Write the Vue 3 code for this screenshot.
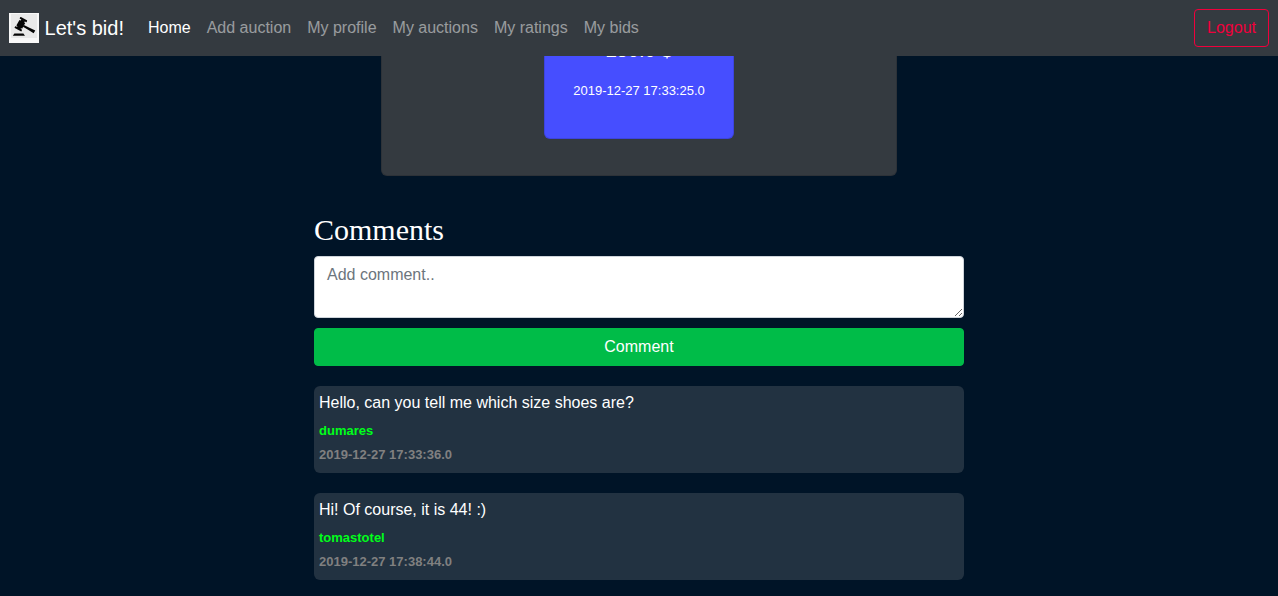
<script setup>
const links = ['Home', 'Add auction', 'My profile', 'My auctions', 'My ratings', 'My bids']
const comments = [
  { text: 'Hello, can you tell me which size shoes are?', author: 'dumares', date: '2019-12-27 17:33:36.0' },
  { text: 'Hi! Of course, it is 44! :)', author: 'tomastotel', date: '2019-12-27 17:38:44.0' },
]
</script>

<template>
  <div class="page">
    <header class="navbar">
      <a class="brand" href="#">
        <svg class="logo" viewBox="0 0 30 30" aria-hidden="true">
          <rect width="30" height="30" fill="#f8f8f8" />
          <rect x="2" y="1" width="26" height="24" fill="#e9e9e9" />
          <g transform="translate(11.8 11.3) rotate(29)" fill="#050505">
            <rect x="-3.3" y="-3.2" width="6.6" height="6.4" />
            <rect x="-3.9" y="-6.4" width="7.8" height="2" rx="0.5" />
            <rect x="-2" y="-5" width="4" height="10" />
            <rect x="-3.9" y="4.2" width="7.8" height="2" rx="0.5" />
            <path d="M3 -1 L8 -1.2 L15.6 -1.7 V1.7 L8 1.2 L3 1Z" />
          </g>
          <path d="M3.8 22.8 L5.4 20.4 H14.4 L16 22.8Z" fill="#050505" />
        </svg>
        Let's bid!
      </a>
      <nav class="links" aria-label="Main">
        <a v-for="(link, i) in links" :key="link" href="#" :class="{ active: i === 0 }">{{ link }}</a>
      </nav>
      <button class="logout" type="button">Logout</button>
    </header>

    <main>
      <section class="auction">
        <div class="bid">
          <p class="price">250.0 $</p>
          <p class="bid-date">2019-12-27 17:33:25.0</p>
        </div>
      </section>

      <section class="comments">
        <h2>Comments</h2>
        <form @submit.prevent>
          <textarea aria-label="Add comment" placeholder="Add comment.." rows="2"></textarea>
          <button class="submit" type="submit">Comment</button>
        </form>
        <article v-for="comment in comments" :key="comment.date" class="comment">
          <p>{{ comment.text }}</p>
          <p class="author">{{ comment.author }}</p>
          <p class="date">{{ comment.date }}</p>
        </article>
      </section>
    </main>
  </div>
</template>

<style>
body {
  background: #001427;
}
</style>

<style scoped>
.page,
.page * {
  box-sizing: border-box;
}

.page {
  color: #fff;
  font: 16px/24px "Liberation Sans", Arial, sans-serif;
}

p,
h2 {
  margin: 0;
}

.navbar {
  position: sticky;
  top: 0;
  z-index: 1;
  display: flex;
  align-items: center;
  height: 56px;
  padding: 0 9px;
  background: #343a40;
}

.brand {
  margin-right: 16px;
  color: #fff;
  font-size: 20px;
  line-height: 30px;
  text-decoration: none;
  white-space: nowrap;
}

.logo {
  width: 30px;
  height: 30px;
  vertical-align: top;
}

.links {
  display: flex;
  flex: 1;
}

.links a {
  padding: 8px;
  color: rgba(255, 255, 255, 0.5);
  text-decoration: none;
}

.links .active {
  color: #fff;
}

.logout {
  padding: 6px 12px;
  border: 1px solid #f0003c;
  border-radius: 4px;
  background: transparent;
  color: #f0003c;
  font: inherit;
}

.auction {
  width: 516px;
  max-width: 100%;
  margin: -20px auto 0;
  padding: 0 20px 36px;
  border: 1px solid rgba(0, 0, 0, 0.125);
  border-radius: 6px;
  background: #343a40;
}

.bid {
  width: 190px;
  margin: 0 auto;
  padding-bottom: 35px;
  border: 1px solid rgba(0, 0, 0, 0.125);
  border-radius: 6px;
  background: #464eff;
  text-align: center;
}

.price {
  margin-bottom: 17px;
  font-size: 20px;
}

.bid-date {
  font-size: 13px;
}

.comments {
  width: 650px;
  max-width: 100%;
  margin: 36px auto 0;
}

h2 {
  margin-bottom: 8px;
  font: 30px/36px "Liberation Serif", "Times New Roman", serif;
}

form {
  display: flex;
  flex-direction: column;
  gap: 10px;
}

textarea {
  height: 62px;
  padding: 6px 12px;
  border: 1px solid #ced4da;
  border-radius: 4px;
  background: #fff;
  color: #495057;
  font: inherit;
  resize: vertical;
}

textarea::placeholder {
  color: #6c757d;
}

.submit {
  padding: 6px 12px;
  border: 1px solid #00bc48;
  border-radius: 4px;
  background: #00bc48;
  color: #fff;
  font: inherit;
}

.comment {
  margin-top: 20px;
  padding: 5px 5px 6px;
  border-radius: 6px;
  background: #223241;
}

.author,
.date {
  font-size: 13px;
  font-weight: 700;
}

.author {
  margin-top: 4px;
  color: #00ff1a;
}

.date {
  color: #808080;
}
</style>
